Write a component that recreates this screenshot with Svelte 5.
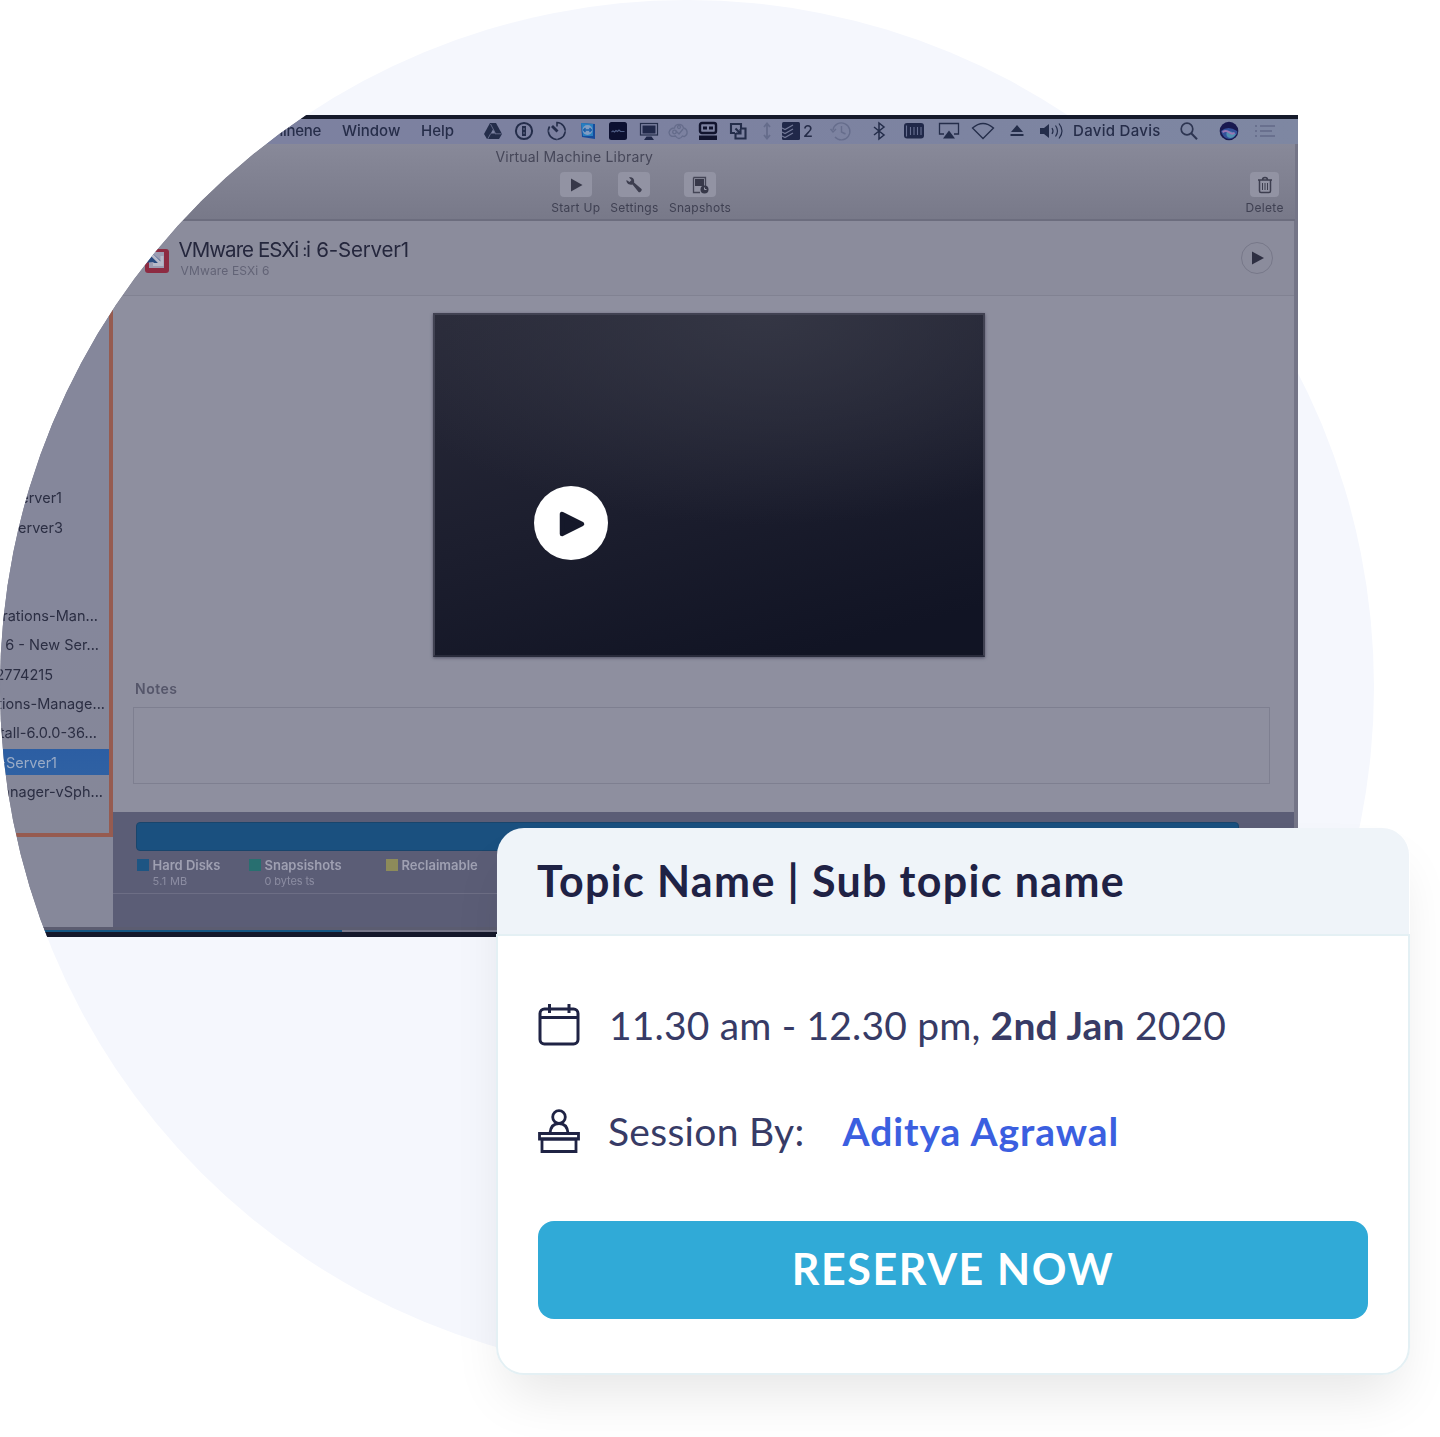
<script>
  // Sidebar rows; `end` is the room left of the divider after the label.
  const machines = [
    { label: 'ESXi 6-Server1', end: 47 },
    { label: 'ESXi 6-Server3', end: 46 },
    { label: '', end: 0 },
    { label: '', end: 0 },
    { label: 'vRealize-Operations-Man...', end: 11 },
    { label: 'ESXi 6 - New Ser...', end: 10 },
    { label: 'Appliance-2774215', end: 56 },
    { label: 'Operations-Manage...', end: 4 },
    { label: 'Install-6.0.0-36...', end: 12 },
    { label: 'ESXi 6-Server1', end: 52, active: true },
    { label: 'Manager-vSph...', end: 6 }
  ];

  // Menu bar icons with the space before each one.
  const statusIcons = [
    { name: 'drive', gap: 0 },
    { name: 'onepass', gap: 9 },
    { name: 'timer', gap: 11 },
    { name: 'viewer', gap: 9 },
    { name: 'meter', gap: 8 },
    { name: 'display', gap: 9 },
    { name: 'cloud', gap: 8 },
    { name: 'robot', gap: 7 },
    { name: 'boxes', gap: 8 },
    { name: 'updown', gap: 7 },
    { name: 'tasks', gap: 2 },
    { name: 'count', gap: -5 },
    { name: 'history', gap: 11 },
    { name: 'bluetooth', gap: 16 },
    { name: 'memory', gap: 13 },
    { name: 'airplay', gap: 13 },
    { name: 'wifi', gap: 12 },
    { name: 'eject', gap: 12 },
    { name: 'volume', gap: 12 }
  ];
</script>

<main class="stage">
  <div class="disc"></div>

  <div class="clip">
    <section class="screen">
      <nav class="menubar">
        <span class="machine">Machinene</span>
        <span class="window">Window</span>
        <span class="help">Help</span>
        <div class="status">
          {#each statusIcons as icon}
            <span class="icon" style:margin-left="{icon.gap}px">
              {#if icon.name === 'count'}
                2
              {:else}
                <svg viewBox="0 0 22 22" width="22" height="22" fill="none" stroke="#242d4a" stroke-width="1.6">
                  {#if icon.name === 'drive'}
                    <path d="M8 3h6l6 11-3 5H5l-3-5z" fill="#242d4a" stroke="none" />
                    <path d="M11 9.500l-2.300 4h4.600z" fill="#7d83a2" stroke="none" />
                    <path d="M8.500 4l5 9.500M8.700 13.500l-3 5.500M13 13.800h6.500" stroke="#7d83a2" stroke-width="0.700" />
                  {:else if icon.name === 'onepass'}
                    <circle cx="11" cy="11" r="8.100" stroke-width="2" />
                    <path d="M11 6v10" stroke-width="4" /><path d="M11 8.500v1M11 12.500v1" stroke="#7d83a2" />
                  {:else if icon.name === 'timer'}
                    <path d="M3.600 6.500A8.400 8.400 0 1 0 11 2.500v4" /><path d="M6 6l5.500 5.500" stroke-width="2.800" />
                    <path d="M2.500 11h2M17.500 11h2M11 17.500v2" stroke="#7d83a2" stroke-width="1" />
                  {:else if icon.name === 'viewer'}
                    <path d="M4 3l14 1v15l-13-2z" fill="#164b9b" stroke="none" />
                    <path d="M4 3l12 1v12l-10 0z" fill="#287fc0" stroke="none" />
                    <circle cx="10.500" cy="10" r="5" fill="#829dc2" stroke="none" />
                    <path d="M6.500 10h8M8.500 8l-2 2 2 2M12.500 8l2 2-2 2" stroke="#1b61aa" stroke-width="1.400" />
                  {:else if icon.name === 'meter'}
                    <rect x="2" y="2" width="18" height="18" rx="2.500" fill="#0c1030" stroke="none" />
                    <path d="M4.500 12l1.500-1 1.500 1 1.500-1.500 1.500 1 1.500-1.500 1.500 1.500h4" stroke="#4f5d85" stroke-width="1.200" />
                  {:else if icon.name === 'display'}
                    <rect x="2.500" y="3.500" width="17" height="11.500" stroke-width="1.200" />
                    <path d="M4.500 5.500h13v8h-13zM8.500 16.500h5l2.500 3.500h-10z" fill="#202849" stroke="none" />
                  {:else if icon.name === 'cloud'}
                    <g stroke="#656c8b" stroke-width="1.300"><path d="M6.500 8a4.600 4.600 0 0 1 9 0 4.500 4.500 0 0 1 1 8.500q-1 0-2-.5-3.500 5-7 0-6 1.500-6.500-3.500Q2 8 6.500 8z" /><circle cx="11" cy="7" r="1.500" /><circle cx="6.500" cy="12" r="1.800" /><path d="M8 11l3 3 4-5" /></g>
                  {:else if icon.name === 'robot'}
                    <rect x="3" y="3" width="16" height="10" rx="2" stroke="#11142e" stroke-width="2.400" />
                    <path d="M6 8h4M12 8h4" stroke="#11142e" stroke-width="3" />
                    <path d="M2 15.500h18V20H2z" fill="#11142e" stroke="none" />
                  {:else if icon.name === 'boxes'}
                    <path d="M8 13H4V4h10v4M13 8.500h5.500V18.500h-10V13M8.500 8.500l4.500 4.500M13.500 9v4.500H9" stroke-width="2.100" />
                  {:else if icon.name === 'updown'}
                    <path d="M11 4v14M8 7l3-3.500L14 7M8 15l3 3.500 3-3.500" stroke="#656c8b" stroke-width="1.800" />
                  {:else if icon.name === 'tasks'}
                    <rect x="2" y="2" width="18" height="18" rx="1.500" fill="#202849" stroke="none" />
                    <path d="M2 8l3 1.500L13 5M2 12l3 1.500L13 9M2 16l3 1.500L13 13" stroke="#737998" stroke-width="1.200" />
                  {:else if icon.name === 'history'}
                    <path d="M3 10a8.500 8.500 0 1 1 2 7M.5 9l2.500 3 3-3M11.500 6v6l4 2" stroke="#666d8c" stroke-width="1.400" />
                  {:else if icon.name === 'bluetooth'}
                    <path d="M6 7l10 8-5 4V3l5 4-10 8" stroke-width="1.500" />
                  {:else if icon.name === 'memory'}
                    <rect x="1" y="3" width="20" height="15.500" rx="3" fill="#202849" stroke="none" />
                    <path d="M3.500 5.500v11M7.500 7v8M11 7v8M14.500 7v8M18 7v8" stroke="#687092" stroke-width="1.100" />
                  {:else if icon.name === 'airplay'}
                    <path d="M6 14H1.500V3.500h19V14H16" stroke-width="1.300" />
                    <path d="M11 10.500l6 8H5z" fill="#242d4a" stroke="none" />
                  {:else if icon.name === 'wifi'}
                    <path d="M.5 8Q11-1 21.500 8L11 18.500z" stroke-width="1.300" />
                  {:else if icon.name === 'eject'}
                    <path d="M11 5l6 7H5zM4.500 14h13v2h-13z" fill="#242d4a" stroke="none" />
                  {:else if icon.name === 'volume'}
                    <path d="M0 8h4l5-4v14l-5-4H0z" fill="#242d4a" stroke="none" />
                    <path d="M12 8q2 3 0 6M15.500 5.500q4 5.500 0 11M19 3.500q6 7.500 0 15" stroke-width="1.200" />
                  {/if}
                </svg>
              {/if}
            </span>
          {/each}
        </div>
        <span class="user">David Davis</span>
        <svg class="search" viewBox="0 0 22 22" width="22" height="22" fill="none" stroke="#2d3551" stroke-width="1.700">
          <circle cx="9" cy="9" r="5.800" /><path d="M13.200 13.200l5.800 6" stroke-width="2" />
        </svg>
        <svg class="siri" viewBox="0 0 22 22" width="22" height="22">
          <circle cx="11" cy="11" r="9.300" fill="#19194f" />
          <path d="M3 11q7-6 16 0 1 2-1.500 4.500-2.500 3.500-6.500 3.500-6-.5-8-8z" fill="#34509a" />
          <path d="M9 11q5 0 9 3-2 4-6 4-5-1-3-7z" fill="#4f8fb0" />
          <path d="M4.500 12q4-2 7 .5t5 0" fill="none" stroke="#9a76b4" stroke-width="2" />
        </svg>
        <svg class="list" viewBox="0 0 22 22" width="22" height="22" fill="none" stroke="#636a88" stroke-width="1.400">
          <path d="M6 6h15M6 11h12M6 16h15M1 6h2M1 11h2M1 16h2" />
        </svg>
      </nav>

      <header class="toolbar">
        <p>Virtual Machine Library</p>
        <div class="tools">
          <div class="tool start">
            <span class="key"><svg viewBox="0 0 18 18" width="18" height="18"><path d="M4 2.500l11.500 6.500L4 15.500z" fill="#373849" /></svg></span>
            Start Up
          </div>
          <div class="tool settings">
            <span class="key"><svg viewBox="0 0 18 18" width="18" height="18"><path d="M4 1.500c3-1 6 1.500 5 5l7.500 6.500c1 1.500-1.500 4-3 3L7.500 8.500C4 9.500 1 7 1.500 4l3 2 2-2z" fill="#3d3e4f" /></svg></span>
            Settings
          </div>
          <div class="tool snaps">
            <span class="key"><svg viewBox="0 0 18 18" width="18" height="18"><path d="M2.500 1.500h12v9M9 16.500H2.500v-15" fill="none" stroke="#444556" stroke-width="1.300" /><path d="M4 3h9v7H4z" fill="#373849" /><circle cx="13.500" cy="13.500" r="4" fill="#373849" /><path d="M13.500 11.500v2h2" fill="none" stroke="#9c9dad" /></svg></span>
            Snapshots
          </div>
          <div class="tool delete">
            <span class="key"><svg viewBox="0 0 18 18" width="18" height="18" fill="none" stroke="#3d3e4f" stroke-width="1.500"><path d="M2 4h14M6.500 4q0-2.500 2.500-2.500T11.500 4M3.500 4v11q0 1.500 1.500 1.500h8q1.500 0 1.500-1.500V4" /><path d="M6.500 7v7M9 7v7M11.500 7v7" stroke-width="1" /></svg></span>
            Delete
          </div>
        </div>
      </header>

      <div class="heading">
        <svg class="vm" viewBox="0 0 30 30" width="30" height="30">
          <rect x="5" y="3" width="24" height="24" rx="3" fill="#8d2b42" />
          <path d="M9 6h15v16H9z" fill="#9b9cb2" /><path d="M4 17V7l6-2 12 11-5 3-4-3z" fill="#294a80" />
          <path d="M12 9l9 9M22 10v8.500h-9" fill="none" stroke="#b7b9c9" stroke-width="3" />
        </svg>
        <div class="names">
          <h2><span class="first">VMware ESXi</span><span class="sliver">:</span><span>i 6-Server1</span></h2>
          <p>VMware ESXi 6</p>
        </div>
        <span class="run"><svg viewBox="0 0 18 18" width="18" height="18"><path d="M4 2.500l12 6.500-12 6.500z" fill="#2e2f42" /></svg></span>
      </div>

      <div class="body">
        <aside>
          <ul>
            {#each machines as row}
              <li class:active={row.active} style:padding-right="{row.end}px">{row.label}</li>
            {/each}
          </ul>
        </aside>
        <div class="pane">
          <div class="content">
            <div class="preview"></div>
            <h3>Notes</h3>
            <div class="notes"></div>
          </div>
          <footer>
            <div class="meter"></div>
            <div class="legend">
              <div class="entry hard"><b>Hard Disks</b><small>5.1 MB</small></div>
              <div class="entry snap"><b>Snapsishots</b><small>0 bytes ts</small></div>
              <div class="entry reclaim"><b>Reclaimable</b></div>
            </div>
          </footer>
        </div>
      </div>
      <div class="scrub"><div class="played"></div></div>
    </section>
  </div>

  <button class="play" aria-label="Play">
    <svg viewBox="0 0 30 30" width="30" height="30"><path d="M5 5v20l20-10z" fill="#15182a" stroke="#15182a" stroke-width="4.500" stroke-linejoin="round" /></svg>
  </button>

  <article class="card">
    <header><h1>Topic Name | Sub topic name</h1></header>
    <div class="details">
      <div class="line when">
        <svg viewBox="0 0 42 44" width="42" height="44" fill="none" stroke="#1f2344" stroke-width="3">
          <rect x="2" y="6" width="38" height="35" rx="4.500" /><path d="M2 14.500h38M11.500 1v9M31 1v9" />
        </svg>
        <p>11.30 am - 12.30 pm, <b>2nd Jan</b> 2020</p>
      </div>
      <div class="line who">
        <svg viewBox="0 0 42 44" width="42" height="44" fill="none" stroke="#1f2344" stroke-width="2.800">
          <circle cx="21" cy="8" r="6.300" /><path d="M12 24q1-9.500 9-9.500t9 9.500" /><path d="M1.500 24.500h39v5.500h-39z" /><path d="M4 30h34v12.500H4z" />
        </svg>
        <p>Session By:</p><a href="#session">Aditya Agrawal</a>
      </div>
      <button class="reserve">RESERVE NOW</button>
    </div>
  </article>
</main>

<style>
  :global(body) { background: #fff; }
  * { box-sizing: border-box; }
  h1, h2, h3, p, ul { margin: 0; padding: 0; font-weight: 400; }
  svg { display: block; flex: none; overflow: visible; }

  .stage {
    position: relative;
    width: 1440px;
    height: 1437px;
    overflow: hidden;
    font-family: Lato, 'Noto Sans', sans-serif;
  }
  .disc {
    position: absolute;
    inset: 0 auto auto 0;
    width: 1374px;
    height: 1374px;
    border-radius: 50%;
    background: #f5f7fd;
  }
  /* Rounds the left side of the window along the disc's edge. */
  .clip {
    position: absolute;
    inset: 0;
    padding-top: 115px;
    clip-path: path('M687 0A687 687 0 0 0 687 1374H1440V0Z');
  }
  .screen {
    display: flex;
    flex-direction: column;
    width: 1297.5px;
    height: 822px;
    border-top: 4px solid #151a2b;
    background: #747587;
    font-family: Inter, Roboto, sans-serif;
    color: #2c3047;
    overflow: hidden;
  }

  .menubar {
    display: flex;
    align-items: center;
    height: 25px;
    padding-bottom: 2px;
    background: linear-gradient(90deg, #7d81a0, #7c81a0 50%, #7e87a2);
    font-size: 15px;
    font-weight: 500;
    color: #262d49;
    white-space: nowrap;
    filter: blur(0.5px);
    flex: none;
  }
  .machine { width: 321px; text-align: right; letter-spacing: -0.3px; }
  .window { width: 58px; margin-left: 21px; }
  .help { width: 33px; margin-left: 21px; }
  .status { display: flex; margin-left: 28px; }
  .icon { display: flex; align-items: center; justify-content: center; width: 22px; height: 22px; flex: none; font-size: 16px; }
  .user { width: 87px; margin-left: 11px; letter-spacing: 0.3px; }
  .search { margin-left: 18px; }
  .siri { margin-left: 18px; }
  .list { margin-left: 14px; }

  .toolbar {
    height: 77px;
    margin-right: 3px;
    padding-top: 4px;
    background: linear-gradient(#888999, #787989);
    border-bottom: 2px solid #6c6d7e;
    color: #3f4052;
    filter: blur(0.5px);
    flex: none;
  }
  .toolbar p { padding-left: 495.5px; font-size: 14px; line-height: 17px; letter-spacing: 0.18px; color: #464759; }
  .tools { display: flex; padding-left: 546px; margin-top: 7px; }
  .tool { display: flex; flex-direction: column; align-items: center; width: 60px; font-size: 12px; line-height: 16px; letter-spacing: 0.3px; white-space: nowrap; }
  .settings { margin-left: -1px; }
  .snaps { width: 66px; margin-left: 3px; }
  .delete { margin-left: 502px; }
  .key { display: flex; align-items: center; justify-content: center; width: 32px; height: 25px; margin-bottom: 3px; border-radius: 4px; background: #9293a3; }
  .delete .key { width: 29px; }

  .heading {
    display: flex;
    align-items: flex-start;
    height: 75px;
    margin-right: 4px;
    padding: 18px 21px 0 139.5px;
    background: #8b8c9c;
    border-bottom: 1px solid #818292;
    filter: blur(0.5px);
    flex: none;
  }
  .vm { margin-top: 7px; }
  .names { flex: 1; margin-left: 9px; }
  h2 { display: flex; font-size: 20.5px; line-height: 22px; letter-spacing: -0.2px; color: #25273d; white-space: nowrap; }
  .first { width: 125px; letter-spacing: -0.95px; }
  .sliver { width: 3.500px; margin-left: -1px; font-size: 16px; letter-spacing: 0; }
  .names p { padding-left: 2px; font-size: 12px; line-height: 18px; letter-spacing: 0.15px; color: #626376; margin-top: 1px; }
  .run { display: flex; align-items: center; justify-content: center; width: 32px; height: 32px; margin-top: 3px; border: 1px solid #777889; border-radius: 50%; }

  .body { display: flex; height: 631px; filter: blur(0.5px); flex: none; }
  aside { width: 113px; background: #86889a; }
  ul {
    height: 541px;
    padding-top: 187px;
    border: solid #965b50;
    border-width: 0 4px 4px 0;
    list-style: none;
    background: linear-gradient(#85879b, #85879b 60%, #858798);
  }
  li { display: flex; align-items: center; justify-content: flex-end; height: 29.4px; font-size: 14.5px; white-space: nowrap; color: #2b2e43; }
  li.active { background: linear-gradient(#2c5ea3, #2f61a3) 0 50% / 100% 26px no-repeat; color: #9aabc6; }
  .pane { flex: 1; border-right: 4px solid #747587; background: #5c5d77; }
  .content { height: 516px; padding: 17px 23.500px 0 20px; background: #8e8f9f; }
  .preview {
    width: 552px;
    height: 344px;
    margin-left: 300px;
    border: 2px solid #414252;
    border-bottom-color: #292b3b;
    background:
      radial-gradient(ellipse 420px 210px at 60% 0, rgba(54, 56, 70, 0.9), rgba(54, 56, 70, 0)),
      linear-gradient(165deg, #292a39 0%, #1c1e2e 50%, #111424 90%);
    box-shadow: 0 1px 3px #55566a;
  }
  h3 { margin: 23px 0 0 2px; font-size: 14px; font-weight: 600; line-height: 18px; letter-spacing: 0.5px; color: #55566a; }
  .notes { height: 77px; margin-top: 9px; border: 1.5px solid #7e7f90; }
  footer { height: 115px; padding: 10px 55px 0 23px; background: #5b5d76; }
  .meter { height: 29px; border: 1px solid #19456c; border-radius: 4px; background: #1a507f; }
  .legend { display: flex; height: 43px; margin: 0 -55px 0 -23px; padding: 5px 0 0 39.500px; border-bottom: 1px solid #6d6e85; color: #9fa0b2; }
  .entry { position: relative; display: flex; flex-direction: column; font-size: 13px; }
  .entry::before { content: ''; position: absolute; left: -16px; top: 3px; width: 12px; height: 12px; background: #1d5583; }
  .entry b { font-weight: 600; line-height: 18px; white-space: nowrap; }
  .entry small { font-size: 11px; line-height: 15px; color: #8c8da2; letter-spacing: -0.1px; }
  .hard { width: 112px; }
  .hard small { letter-spacing: 0.3px; }
  .snap { width: 137px; }
  .snap::before { background: #286f70; }
  .reclaim::before { background: #8d8b5a; }
  .scrub { height: 10px; border-top: 3px solid #5b5c70; border-bottom: 5px solid #15182b; background: #77778a; flex: none; }
  .played { width: 342px; height: 2px; background: #155582; }

  .play {
    position: absolute;
    left: 534px;
    top: 486px;
    display: flex;
    align-items: center;
    justify-content: center;
    width: 74px;
    height: 74px;
    padding: 1px 0 0 2px;
    border: 0;
    border-radius: 50%;
    background: #fff;
  }

  .card {
    position: absolute;
    left: 496px;
    top: 828px;
    width: 914px;
    height: 547px;
    border-radius: 28px;
    box-shadow: 0 30px 54px -12px rgba(0, 0, 0, 0.1);
  }
  .card header {
    display: flex;
    align-items: center;
    height: 106px;
    margin: 0 1px;
    padding: 0 0 1px 40px;
    border-radius: 27px 27px 0 0;
    background: #eff4f9;
  }
  h1 { font-size: 43px; font-weight: 700; letter-spacing: 1.35px; color: #1f2245; white-space: nowrap; }
  .details {
    height: 441px;
    padding: 65px 40px 0 40px;
    border: 2px solid #e4f0f4;
    border-radius: 0 0 28px 28px;
    background: #fff;
  }
  .line { display: flex; align-items: center; height: 48px; font-size: 39px; letter-spacing: 0.17px; color: #373b66; white-space: nowrap; }
  .line p { margin: -1px 0 0 29px; }
  .line b { font-weight: 700; }
  .who { margin-top: 58px; }
  .who p { margin-left: 28px; letter-spacing: 0.3px; }
  .who a { margin: -1px 0 0 38px; font-weight: 700; letter-spacing: 0.95px; color: #3b5fe0; text-decoration: none; }
  .reserve {
    display: block;
    width: 830px;
    height: 98px;
    margin-top: 66px;
    padding: 0 0 3px;
    border: 0;
    border-radius: 16px;
    background: #30aad7;
    color: #fff;
    font-family: Lato, 'Noto Sans', sans-serif;
    font-size: 43px;
    font-weight: 700;
    letter-spacing: 1.6px;
  }
</style>
